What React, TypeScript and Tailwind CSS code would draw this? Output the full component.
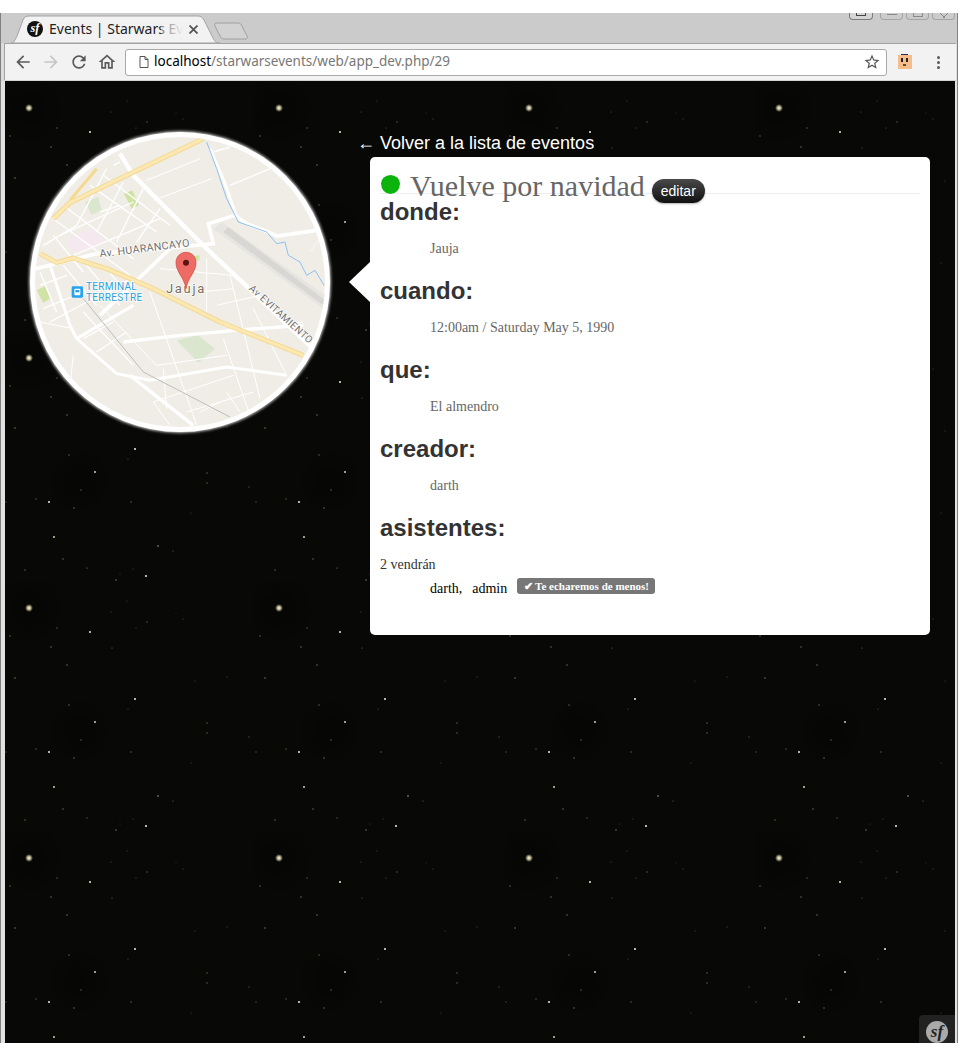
import React from 'react';

// [x, y, radius, colour] inside one 250px tile of the star background
const stars: [number, number, number, string][] = [
  [130, 118, 1, '#f5f2e0'], [90, 141, 0.9, '#e8e4c8'], [44, 171, 1, '#f0ecd0'], [49, 206, 0.9, '#e8e4c0'],
  [141, 245, 1, '#f5f2e8'], [85, 51, 1, '#f2eecc'], [153, 215, 0.8, '#a8a478'],
  [64, 124, 0.7, '#6d6a48'], [123, 128, 0.6, '#55533c'], [76, 159, 0.7, '#6d6a48'], [31, 168, 0.7, '#5f5c40'],
  [126, 171, 0.7, '#6d6a48'], [69, 177, 0.7, '#7a7650'], [202, 142, 0.7, '#6d6a48'], [202, 152, 0.7, '#6d6a48'],
  [244, 156, 0.7, '#4f4d38'], [1, 171, 0.7, '#4f4d38'], [186, 182, 0.6, '#45432f'], [58, 228, 0.7, '#7a7650'],
  [20, 239, 0.7, '#6d6a48'], [82, 237, 0.6, '#8a8658'], [128, 238, 0.6, '#45432f'], [168, 220, 0.6, '#6d6a48'],
  [111, 249, 0.7, '#8a8658'], [115, 243, 0.5, '#45432f'], [52, 47, 0.7, '#5f5c40'], [5, 55, 0.7, '#6d6a48'],
  [142, 41, 0.7, '#5f5c40'], [106, 31, 0.6, '#4f4d38'], [178, 38, 0.6, '#4f4d38'], [171, 32, 0.5, '#33322a'],
  [131, 47, 0.6, '#55533c'], [122, 20, 0.6, '#45432f'], [62, 84, 0.7, '#7a7650'], [46, 66, 0.7, '#7a7650'],
  [107, 67, 0.6, '#6d6a48'], [10, 97, 0.7, '#8a8658'], [222, 96, 0.6, '#4f4d38'], [190, 100, 0.6, '#45432f'],
];

const whiteRoads: [string, number][] = [
  ['M300 85 L340 150 L560 370 L900 690', 13],
  ['M40 432 L230 385 L450 368 L580 355 L565 295 L645 270 L680 295 L750 322 L770 332 L890 315', 11],
  ['M570 70 L615 175 L650 275', 9],
  ['M580 80 L630 65', 5], ['M630 180 L750 130', 4], ['M380 165 L540 100', 3], ['M400 225 L575 160', 3],
  ['M450 370 L240 570', 11], ['M310 650 L480 630 L680 612 L850 600', 10],
  ['M90 420 L150 600 L170 640 L290 745 L390 765 L620 725 L800 750', 9],
  ['M170 640 L340 540', 9], ['M390 500 L530 900', 3], ['M330 750 L520 900', 10],
  ['M100 280 L330 450', 4], ['M130 240 L340 400', 4], ['M210 180 L410 320', 4], ['M250 150 L450 300', 4],
  ['M170 300 L260 130', 4], ['M230 320 L310 170', 4], ['M290 350 L370 190', 4], ['M350 350 L420 250', 4],
  ['M120 330 L340 230', 4], ['M160 390 L420 280', 4], ['M240 260 L300 240', 4], ['M280 120 L300 110', 4],
  ['M70 360 L170 300', 4], ['M60 480 L140 450', 4], ['M70 550 L190 500', 4], ['M90 590 L200 530', 4],
  ['M130 420 L230 540', 4], ['M200 420 L300 540', 4], ['M270 445 L350 530', 4], ['M330 460 L240 520', 4],
  ['M190 560 L340 720', 4], ['M240 540 L390 700', 3], ['M280 590 L190 640', 4], ['M320 620 L230 680', 4],
  ['M420 430 L640 450', 3], ['M560 400 L560 560', 3], ['M630 450 L720 820', 3], ['M540 500 L640 490', 3],
  ['M590 540 L720 510', 3], ['M610 640 L690 870', 3], ['M700 550 L800 750', 3], ['M660 620 L850 590', 3],
  ['M430 730 L440 850', 3], ['M400 830 L640 750', 3], ['M500 860 L700 800', 3], ['M620 800 L660 860', 3],
  ['M400 830 L450 900', 3], ['M160 690 L150 780', 3], ['M60 590 L160 610', 3], ['M870 380 L900 340', 2],
  ['M390 700 L410 720 L620 690', 3], ['M100 330 L190 440', 4], ['M60 440 L110 560', 4], ['M540 860 L600 830', 3],
];

const BackdropStars = () => (
  <svg className="absolute inset-0 h-full w-full" aria-hidden="true">
    <defs>
      <radialGradient id="dust">
        <stop offset="0" stopColor="#000" stopOpacity="0.35" />
        <stop offset="1" stopColor="#000" stopOpacity="0" />
      </radialGradient>
      <radialGradient id="glow">
        <stop offset="0" stopColor="#ffffff" />
        <stop offset="0.4" stopColor="#f3eebc" stopOpacity="0.75" />
        <stop offset="1" stopColor="#f3eebc" stopOpacity="0" />
      </radialGradient>
      <pattern id="starTile" width="250" height="250" patternUnits="userSpaceOnUse">
        <rect width="250" height="250" fill="#080807" />
        <circle cx="24" cy="27" r="40" fill="url(#dust)" />
        <circle cx="75" cy="150" r="36" fill="url(#dust)" />
        <circle cx="24" cy="27" r="4" fill="url(#glow)" />
        {stars.map(([x, y, r, c]) => (
          <circle key={`${x}-${y}`} cx={x} cy={y} r={r} fill={c} />
        ))}
      </pattern>
    </defs>
    <rect width="100%" height="100%" fill="url(#starTile)" />
  </svg>
);

const SfMark = ({ size, circle, ink }: { size: number; circle: string; ink: string }) => (
  <span
    className="flex shrink-0 items-center justify-center rounded-full font-['Liberation_Serif',serif] font-bold italic"
    style={{ width: size, height: size, backgroundColor: circle, color: ink, fontSize: size * 0.78 }}
  >
    <span className="-mt-px leading-none">sf</span>
  </span>
);

const MapCircle = () => (
  <div className="h-[300px] w-[300px] shrink-0 overflow-hidden rounded-full border-[5px] border-white bg-white shadow-[0_0_3px_1px_rgba(255,255,255,0.8)]">
    <svg viewBox="45 35 870 870" className="block h-full w-full bg-[#efede6]">
      <polygon points="140,345 220,305 250,345 230,365 160,385" fill="#f6e8ef" />
      <polygon points="312,205 337,195 357,240 335,250" fill="#cfe3a5" />
      <polygon points="195,230 235,215 245,255 215,268" fill="#dbe6cf" />
      <polygon points="50,495 75,483 90,520 70,532" fill="#cfe3a5" />
      <polygon points="470,645 535,630 585,670 535,712" fill="#dbe6cf" />
      <polygon points="520,392 538,390 538,405 522,407" fill="#cfe3a5" />
      <polygon points="580,310 605,290 915,510 910,550" fill="#e6e5e1" />
      <polygon points="610,320 625,305 915,525 910,540" fill="#d8d7d3" />
      {whiteRoads.map(([d, w]) => (
        <path key={d} d={d} fill="none" stroke="#fff" strokeWidth={w} />
      ))}
      <path d="M190 520 L370 740 L630 875" fill="none" stroke="#bdbdbd" strokeWidth="3" />
      <path
        d="M560 50 L590 130 L620 220 L655 290 L740 320 L770 355 L795 350 L805 390 L840 410 L860 450 L885 435 L912 480"
        fill="none"
        stroke="#8fc0f0"
        strokeWidth="3"
      />
      <g fill="none" stroke="#f5d98f" strokeLinejoin="round">
        <path d="M100 280 L150 232 L330 145 L550 40" strokeWidth="15" />
        <path d="M150 225 L230 130" strokeWidth="9" />
        <path d="M60 385 L110 412 L160 398 L210 415 L260 430 L400 490 L600 590 L850 690" strokeWidth="15" />
      </g>
      <g fill="none" stroke="#fbe8b4" strokeLinejoin="round">
        <path d="M100 280 L150 232 L330 145 L550 40" strokeWidth="9" />
        <path d="M60 385 L110 412 L160 398 L210 415 L260 430 L400 490 L600 590 L850 690" strokeWidth="9" />
      </g>
      <g fontFamily="Roboto, sans-serif" stroke="#fff" strokeWidth="4" paintOrder="stroke">
        <text x="240" y="396" fontSize="32" fill="#6f6f6f" transform="rotate(-7 240 396)" letterSpacing="1">
          Av. HUARANCAYO
        </text>
        <text x="685" y="492" fontSize="30" fill="#6f6f6f" transform="rotate(42 685 492)" letterSpacing="1">
          Av EVITAMIENTO
        </text>
        <text x="438" y="503" fontSize="39" fill="#7a6f60" letterSpacing="5">
          Jauja
        </text>
        <text x="198" y="495" fontSize="30" fill="#2a9fdc" letterSpacing="1">
          TERMINAL
        </text>
        <text x="198" y="526" fontSize="30" fill="#2a9fdc" letterSpacing="1">
          TERRESTRE
        </text>
      </g>
      <rect x="155" y="483" width="34" height="34" rx="4" fill="#2aa3ee" />
      <rect x="163" y="490" width="18" height="20" rx="3" fill="#fff" />
      <rect x="166" y="494" width="12" height="7" fill="#2aa3ee" />
      <path
        d="M498 490 C492 455 468 440 468 412 C468 394 481 381 498 381 C515 381 528 394 528 412 C528 440 504 455 498 490 Z"
        fill="#ee6a64"
        stroke="#d0423c"
        strokeWidth="2"
      />
      <circle cx="498" cy="412" r="9" fill="#5b1414" />
    </svg>
  </div>
);

const iconPaths = {
  back: 'M20 11H7.83l5.59-5.59L12 4l-8 8 8 8 1.41-1.41L7.83 13H20v-2z',
  forward: 'M12 4l-1.41 1.41L16.17 11H4v2h12.17l-5.58 5.59L12 20l8-8z',
  reload:
    'M17.65 6.35C16.2 4.9 14.21 4 12 4c-4.42 0-7.99 3.58-7.99 8s3.57 8 7.99 8c3.73 0 6.84-2.55 7.73-6h-2.08c-.82 2.33-3.04 4-5.65 4-3.31 0-6-2.69-6-6s2.69-6 6-6c1.66 0 3.14.69 4.22 1.78L13 11h7V4l-2.35 2.35z',
  home: 'M12 5.69l5 4.5V18h-2v-6H9v6H7v-7.81l5-4.5M12 3L2 12h3v8h6v-6h2v6h6v-8h3L12 3z',
  star: 'M22 9.24l-7.19-.62L12 2 9.19 8.63 2 9.24l5.46 4.73L5.82 21 12 17.27 18.18 21l-1.63-7.03L22 9.24zM12 15.4l-3.76 2.27 1-4.28-3.32-2.88 4.38-.38L12 6.1l1.71 4.04 4.38.38-3.32 2.88 1 4.28L12 15.4z',
};

const ToolIcon = ({ d, color, size = 20 }: { d: string; color: string; size?: number }) => (
  <svg viewBox="0 0 24 24" width={size} height={size} fill={color} className="shrink-0">
    <path d={d} />
  </svg>
);

const BrowserChrome = () => (
  <div className="shrink-0 bg-[#dcdcdc]">
    <div className="relative h-[30px] bg-[#cbcbcb]">
      <svg width="260" height="30" className="absolute -left-px top-0">
        <path d="M11 30 C14 30 15 27 17 23 L23 7 C24 4 26 3 29 3 L197 3 C201 3 202 4 204 7 L213 25 C215 29 216 30 220 30 Z" fill="#f2f2f2" stroke="#a3a3a3" />
        <path d="M217 10 L238 10 C240 10 241 11 242 13 L247 23 C248 25 247 26 245 26 L224 26 C222 26 221 25 220 23 L215 13 C214 11 215 10 217 10 Z" fill="#d2d2d2" stroke="#a0a0a0" />
      </svg>
      <div className="absolute left-[26px] top-[6px] flex h-[20px] items-center">
        <SfMark size={16} circle="#111" ink="#fff" />
        <div className="relative ml-[6px] w-[134px] overflow-hidden whitespace-nowrap font-['Noto_Sans',sans-serif] text-[14px] leading-[20px] text-[#222]">
          Events | Starwars Events
          <div className="absolute inset-y-0 right-0 w-[22px] bg-gradient-to-r from-[#f2f2f2]/40 to-[#f2f2f2]" />
        </div>
        <svg width="9" height="9" viewBox="0 0 9 9" stroke="#555" strokeWidth="1.8" className="ml-[6px] shrink-0">
          <path d="M.5 .5l8 8M8.500 .5l-8 8" />
        </svg>
      </div>
      <div className="absolute right-[2px] top-0 flex gap-[3px]">
        <div className="mr-[4px] flex h-[7px] w-[24px] justify-center rounded-b border border-t-0 border-[#7d7d7d] bg-[#d5d5d5]">
          <div className="h-[3px] w-[10px] border border-t-0 border-[#444]" />
        </div>
        <div className="flex h-[7px] w-[23px] justify-center rounded-b border border-t-0 border-[#a5a5a5]">
          <div className="h-[2px] w-[10px] border-b border-[#8a8a8a]" />
        </div>
        <div className="flex h-[7px] w-[23px] justify-center rounded-b border border-t-0 border-[#a5a5a5]">
          <div className="h-[4px] w-[10px] border border-t-0 border-[#8a8a8a]" />
        </div>
        <div className="flex h-[7px] w-[23px] justify-center rounded-b border border-t-0 border-[#a5a5a5]">
          <svg width="10" height="5" viewBox="0 0 10 5" stroke="#8a8a8a" className="shrink-0">
            <path d="M1 0l5 5M9 0L4 5" />
          </svg>
        </div>
      </div>
    </div>
    <div className="mr-px ml-[3px] flex h-[37px] items-center border-t border-l border-[#a3a3a3] bg-[#f2f2f2] pl-[8px]">
      <div className="flex w-[112px] items-center gap-[8px]">
        <ToolIcon d={iconPaths.back} color="#5a5a5a" />
        <ToolIcon d={iconPaths.forward} color="#c6c6c6" />
        <ToolIcon d={iconPaths.reload} color="#5a5a5a" />
        <ToolIcon d={iconPaths.home} color="#5a5a5a" />
      </div>
      <div className="flex h-[27px] w-[762px] items-center rounded-[3px] border border-[#a9a9a9] bg-white pr-[5px] pl-[13px]">
        <svg width="10" height="12" viewBox="0 0 10 12" fill="none" stroke="#555" strokeWidth="1" className="shrink-0">
          <path d="M1 .5h5L9 3.500V11.500H1z M6 .5V3.500H9" />
        </svg>
        <span className="ml-[5px] font-['Noto_Sans',sans-serif] text-[13.5px] leading-none whitespace-nowrap text-[#777]">
          <span className="text-black">localhost</span>/starwarsevents/web/app_dev.php/29
        </span>
        <span className="ml-auto">
          <ToolIcon d={iconPaths.star} color="#555" size={18} />
        </span>
      </div>
      <div className="relative ml-[11px] h-[14px] w-[14px] bg-[#f5bd8c]">
        <div className="absolute -top-px left-[3px] h-[1px] w-[7px] bg-[#2a2a5a]" />
        <div className="absolute top-[3px] left-[3px] h-[4px] w-[2px] bg-[#222]" />
        <div className="absolute top-[3px] left-[8px] h-[4px] w-[2px] bg-[#222]" />
        <div className="absolute top-[9px] left-[5px] h-[2px] w-[3px] bg-[#6b4a2a]" />
      </div>
      <div className="ml-[25px] flex flex-col gap-[2px]">
        <div className="h-[3px] w-[3px] rounded-full bg-[#5a5a5a]" />
        <div className="h-[3px] w-[3px] rounded-full bg-[#5a5a5a]" />
        <div className="h-[3px] w-[3px] rounded-full bg-[#5a5a5a]" />
      </div>
    </div>
    <div className="h-px bg-[#d4d4d4]" />
  </div>
);

const Section = ({ title, children }: { title: string; children: React.ReactNode }) => (
  <div className="h-[79px]">
    <h2 className="font-['Liberation_Sans',sans-serif] text-[24px] leading-[27px] font-bold text-[#333]">{title}</h2>
    <p className="mt-[14px] pl-[50px] text-[14px] leading-[20px] text-[#666]">{children}</p>
  </div>
);

export default function App() {
  return (
    <div className="flex h-[1056px] w-[960px] flex-col overflow-hidden bg-white pt-[13px] font-['Liberation_Serif',serif]">
      <div className="flex h-[1030px] w-[958px] border-x border-[#808080]">
        <div className="flex w-[956px] flex-col">
          <BrowserChrome />
          <main className="relative flex-1 overflow-hidden border-r-2 border-l-4 border-[#e2e2e2]">
            <BackdropStars />
            <div className="relative flex pt-[51px] pl-[25px]">
              <MapCircle />
              <div className="-mt-px ml-[27px]">
                <a className="block font-['Liberation_Sans',sans-serif] text-[18px] leading-[24px] whitespace-nowrap text-white">
                  ← Volver a la lista de eventos
                </a>
                <div className="relative mt-[2px] ml-[13px] h-[478px] w-[560px] rounded-[5px] bg-white px-[10px] pt-[15px]">
                  <div className="absolute -left-[21px] top-[105px] h-0 w-0 border-y-[20px] border-r-[21px] border-y-transparent border-r-white" />
                  <h1 className="flex h-[22px] items-start border-b border-[#eee] text-[30px] leading-[30px] whitespace-nowrap text-[#666]">
                    <span className="mt-[3px] ml-px h-[19px] w-[19px] shrink-0 rounded-[50%_50%_50%_50%/45%_45%_55%_55%] bg-[#0cb30c]" />
                    <span className="-mt-[1px] ml-[10px]">Vuelve por navidad</span>
                    <span className="mt-[7px] ml-[7px] flex h-[24px] w-[53px] shrink-0 items-center justify-center rounded-full bg-gradient-to-b from-[#4a4a4a] to-[#111] font-['Liberation_Sans',sans-serif] text-[14px] leading-none text-white shadow-[0_1px_2px_rgba(0,0,0,0.3)]">
                      editar
                    </span>
                  </h1>
                  <div className="mt-[4px]">
                    <Section title="donde:">Jauja</Section>
                    <Section title="cuando:">12:00am / Saturday May 5, 1990</Section>
                    <Section title="que:">El almendro</Section>
                    <Section title="creador:">darth</Section>
                    <h2 className="font-['Liberation_Sans',sans-serif] text-[24px] leading-[27px] font-bold text-[#333]">asistentes:</h2>
                    <p className="mt-[14px] text-[14px] leading-[20px] text-[#333]">2 vendrán</p>
                    <div className="mt-[3px] flex h-[20px] items-center pl-[50px] text-[14px] text-black">
                      <span>darth,</span>
                      <span className="ml-[10px]">admin</span>
                      <span className="-mt-[4px] ml-[10px] flex h-[16px] w-[138px] items-center justify-center rounded-[3px] bg-[#777] text-[11px] leading-none font-bold whitespace-nowrap text-white">
                        ✔ Te echaremos de menos!
                      </span>
                    </div>
                  </div>
                </div>
              </div>
            </div>
            <div className="absolute right-0 bottom-0 flex h-[28px] w-[36px] items-start justify-center rounded-tl bg-[#222] pt-[6px]">
              <SfMark size={22} circle="#aaa" ink="#222" />
            </div>
          </main>
        </div>
      </div>
    </div>
  );
}
